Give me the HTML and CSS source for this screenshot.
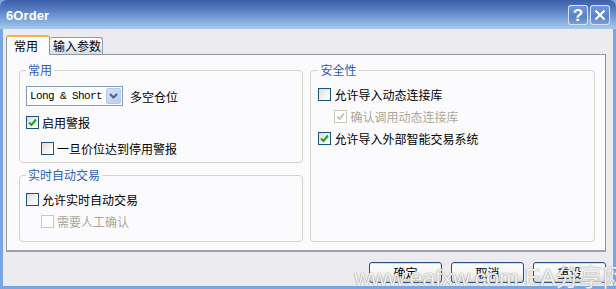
FILE: index.html
```html
<!DOCTYPE html>
<html>
<head>
<meta charset="utf-8">
<link rel="stylesheet" href="styles.css">
</head>
<body>
<div class="window">
  <div class="titlebar">
    <span class="title">6Order</span>
    <div class="caption-btns">
      <span class="cbtn help">?</span>
      <span class="cbtn close"><svg width="12" height="12" viewBox="0 0 12 12"><path d="M1.5 1.5 L10.5 10.5 M10.5 1.5 L1.5 10.5" stroke="#fff" stroke-width="2.2" fill="none"/></svg></span>
    </div>
  </div>
  <div class="body">
    <div class="tabs">
      <div class="tab active">常用</div>
      <div class="tab">输入参数</div>
    </div>
    <div class="panel">
      <div class="col">
        <fieldset class="group g1">
          <legend>常用</legend>
          <div class="combo-row">
            <div class="combo">
              <span class="combo-text">Long &amp; Short</span>
              <span class="combo-btn"><svg width="9" height="6" viewBox="0 0 9 6"><path d="M1 1 L4.5 4.5 L8 1" stroke="#4d6185" stroke-width="2" fill="none"/></svg></span>
            </div>
            <span class="combo-label">多空仓位</span>
          </div>
          <div class="chk tall"><span class="box"><svg class="mark" width="9" height="9" viewBox="0 0 9 9"><path d="M1 4.5 L3.5 7 L8 1.5" stroke="#21a121" stroke-width="2" fill="none"/></svg></span>启用警报</div>
          <div class="chk tall indent"><span class="box"></span>一旦价位达到停用警报</div>
        </fieldset>
        <fieldset class="group g2">
          <legend>实时自动交易</legend>
          <div class="chk"><span class="box"></span>允许实时自动交易</div>
          <div class="chk indent disabled"><span class="box"></span>需要人工确认</div>
        </fieldset>
      </div>
      <fieldset class="group g3">
        <legend>安全性</legend>
        <div class="chk"><span class="box"></span>允许导入动态连接库</div>
        <div class="chk indent disabled"><span class="box"><svg class="mark" width="9" height="9" viewBox="0 0 9 9"><path d="M1 4.5 L3.5 7 L8 1.5" stroke="#cac8bb" stroke-width="2" fill="none"/></svg></span>确认调用动态连接库</div>
        <div class="chk"><span class="box"><svg class="mark" width="9" height="9" viewBox="0 0 9 9"><path d="M1 4.5 L3.5 7 L8 1.5" stroke="#21a121" stroke-width="2" fill="none"/></svg></span>允许导入外部智能交易系统</div>
      </fieldset>
    </div>
    <div class="buttons">
      <button class="btn">确定</button>
      <button class="btn">取消</button>
      <button class="btn">重设</button>
    </div>
  </div>
  <div class="watermark">www.eafxw.com EA分享网</div>
</div>
</body>
</html>
```

FILE: styles.css
```css
* { box-sizing: border-box; }
html, body { margin: 0; padding: 0; }
body {
  width: 616px;
  height: 289px;
  overflow: hidden;
  font-family: "Noto Sans CJK SC", "Liberation Sans", sans-serif;
  font-size: 12px;
  color: #000;
  background: #7ba4e3;
}
.window {
  position: relative;
  width: 616px;
  height: 289px;
  overflow: hidden;
  display: flex;
  flex-direction: column;
}
.titlebar {
  height: 29px;
  flex: none;
  display: flex;
  align-items: center;
  justify-content: space-between;
  padding: 0 6px 0 6px;
  border-radius: 7px 7px 0 0;
  background: linear-gradient(#3d5fa9 0%, #5479bd 30%, #7aa2d9 65%, #a8caee 100%);
}
.title {
  color: #fff;
  font-family: "Liberation Sans", sans-serif;
  font-weight: bold;
  font-size: 13px;
  letter-spacing: 0.1px;
  padding-top: 1px;
}
.caption-btns {
  display: flex;
  gap: 2px;
  margin-top: 1px;
}
.cbtn {
  width: 20px;
  height: 20px;
  border: 1px solid rgba(235, 242, 255, 0.85);
  border-radius: 3px;
  background: linear-gradient(#6f95d6, #5b82c6 60%, #7aa0dc);
  display: flex;
  align-items: center;
  justify-content: center;
  color: #fff;
}
.help {
  font-family: "Liberation Sans", sans-serif;
  font-weight: bold;
  font-size: 17px;
  line-height: 1;
}
.body {
  flex: 1;
  display: flex;
  flex-direction: column;
  background: #ecebf0;
  border: 3px solid #7ba4e3;
  border-top: 0;
  padding: 6px 7px 0 3px;
}
.tabs {
  display: flex;
  align-items: flex-end;
  height: 19px;
}
.tab {
  height: 17px;
  padding: 0 1px 0 3px;
  border: 1px solid #919b9c;
  border-bottom: 0;
  border-left: 0;
  border-radius: 3px 3px 0 0;
  background: linear-gradient(#ffffff, #eef1f6 50%, #d3dcea);
  line-height: 16px;
  white-space: nowrap;
}
.tab.active {
  position: relative;
  z-index: 1;
  height: 20px;
  width: 44px;
  margin-bottom: -1px;
  padding-left: 7px;
  border-left: 1px solid #919b9c;
  border-top: 2px solid #f3b24a;
  background: #fcfcfe;
  line-height: 18px;
}
.panel {
  width: 600px;
  height: 198px;
  display: flex;
  gap: 7px;
  padding: 8px 10px 8px 12px;
  border: 1px solid #919b9c;
  border-right-color: #8a93a0;
  border-bottom: 2px solid #9aa2b0;
  background: #fbfbfd;
}
.col {
  width: 285px;
  display: flex;
  flex-direction: column;
  gap: 5px;
}
.group {
  margin: 0;
  min-width: 0;
  border: 1px solid #d3d2cb;
  border-radius: 4px;
  padding: 0 6px 0 6px;
}
.group legend {
  padding: 0 2px;
  margin-left: 0;
  line-height: 14px;
  color: #2f5cb5;
}
.g1 { height: 100px; padding-top: 9px; }
.g2 { flex: 1; padding-top: 6px; }
.g3 { width: 285px; padding-top: 6px; padding-left: 7px; }
.combo-row {
  display: flex;
  align-items: center;
  gap: 7px;
  height: 20px;
  margin-bottom: 3px;
}
.combo {
  width: 97px;
  height: 20px;
  border: 1px solid #7f9db9;
  background: #fff;
  display: flex;
  align-items: center;
  justify-content: space-between;
  padding: 0 1px 0 3px;
}
.combo-text {
  font-family: "Liberation Mono", monospace;
  font-size: 11px;
  letter-spacing: -0.6px;
}
.combo-btn {
  width: 15px;
  height: 16px;
  border: 1px solid #b7c9e8;
  border-radius: 2px;
  background: linear-gradient(135deg, #d4e1f9, #b9cdf3);
  display: flex;
  align-items: center;
  justify-content: center;
}
.chk {
  display: flex;
  align-items: center;
  gap: 3px;
  height: 22px;
}
.chk.tall { height: 26px; }
.chk.indent { padding-left: 15px; }
.g3 .chk.indent { padding-left: 16px; }
.box {
  width: 13px;
  height: 13px;
  flex: none;
  border: 1px solid #1c5180;
  background: linear-gradient(135deg, #dcdcd7, #ffffff 85%);
  display: flex;
  align-items: center;
  justify-content: center;
}
.chk.disabled { color: #aca899; }
.chk.disabled .box {
  border-color: #cac8bb;
  background: #fff;
}
.buttons {
  display: flex;
  justify-content: flex-end;
  gap: 8px;
  margin-top: 10px;
}
.btn {
  width: 73px;
  height: 21px;
  padding: 0;
  font-family: "Noto Sans CJK SC", sans-serif;
  font-size: 12px;
  color: #000;
  border: 1px solid #2b4f8a;
  border-radius: 3px;
  background: linear-gradient(#ffffff, #f3f3f1 60%, #dcd9d0);
  box-shadow: inset 0 1px 0 #cfdcf2, inset 0 -1px 0 #cdc9bf;
}
.btn + .btn { margin-left: 1px; }
.watermark {
  position: absolute;
  left: 354px;
  top: 258px;
  white-space: nowrap;
  font-family: "Liberation Sans", "Noto Sans CJK SC", sans-serif;
  font-size: 24px;
  letter-spacing: -0.5px;
  color: rgba(255, 255, 255, 0.85);
  text-shadow: 0 0 1px #9a9a9a, 0 0 1px #9a9a9a;
  pointer-events: none;
}
```
